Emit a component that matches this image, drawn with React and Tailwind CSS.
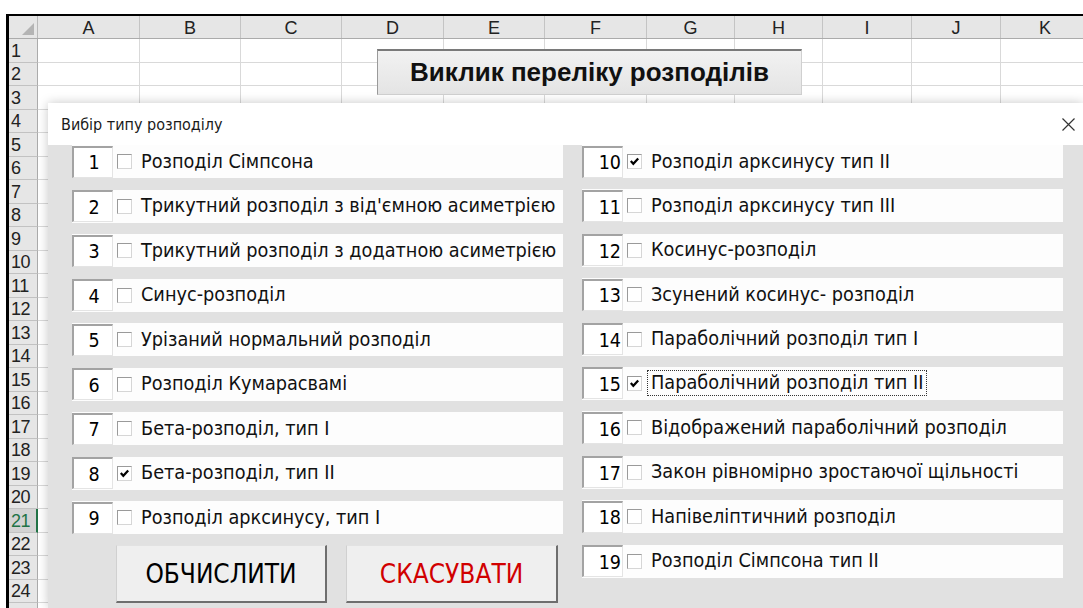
import React from "react";

// Spreadsheet column headers with their pixel widths
const columns = [
  { label: "A", w: "w-[102px]" },
  { label: "B", w: "w-[101px]" },
  { label: "C", w: "w-[101px]" },
  { label: "D", w: "w-[102px]" },
  { label: "E", w: "w-[101px]" },
  { label: "F", w: "w-[102px]" },
  { label: "G", w: "w-[88px]" },
  { label: "H", w: "w-[88px]" },
  { label: "I", w: "w-[89px]" },
  { label: "J", w: "w-[89px]" },
  { label: "K", w: "w-[89px]" },
];

const rows = Array.from({ length: 25 }, (_, i) => i + 1);

const leftItems = [
  { n: 1, text: "Розподіл Сімпсона" },
  { n: 2, text: "Трикутний розподіл з від'ємною асиметрією" },
  { n: 3, text: "Трикутний розподіл з додатною асиметрією" },
  { n: 4, text: "Синус-розподіл" },
  { n: 5, text: "Урізаний нормальний розподіл" },
  { n: 6, text: "Розподіл Кумарасвамі" },
  { n: 7, text: "Бета-розподіл, тип I" },
  { n: 8, text: "Бета-розподіл, тип II", checked: true },
  { n: 9, text: "Розподіл арксинусу, тип I" },
];

const rightItems = [
  { n: 10, text: "Розподіл арксинусу тип II", checked: true },
  { n: 11, text: "Розподіл арксинусу тип III" },
  { n: 12, text: "Косинус-розподіл" },
  { n: 13, text: "Зсунений косинус- розподіл" },
  { n: 14, text: "Параболічний розподіл тип I" },
  { n: 15, text: "Параболічний розподіл тип II", checked: true, focused: true },
  { n: 16, text: "Відображений параболічний розподіл" },
  { n: 17, text: "Закон рівномірно зростаючої щільності" },
  { n: 18, text: "Напівеліптичний розподіл" },
  { n: 19, text: "Розподіл Сімпсона тип II" },
];

const uiFont = "font-['DejaVu_Sans_Condensed','DejaVu_Sans',sans-serif]";

function CheckBox({ checked }) {
  return (
    <div className="w-[15px] h-[15px] shrink-0 bg-white border border-t-[#9a9a9a] border-l-[#9a9a9a] border-r-[#d6d6d6] border-b-[#d6d6d6] flex items-center justify-center">
      {checked && (
        <svg width="11" height="11" viewBox="0 0 11 11">
          <path d="M1.8 5 L4.3 7.8 L9.2 2.4" fill="none" stroke="#000" strokeWidth="2.2" />
        </svg>
      )}
    </div>
  );
}

function Item({ n, text, checked, focused, align }) {
  return (
    <div className="h-[33px] bg-[#fdfdfd] flex items-center">
      <div
        className={
          "w-[41px] h-[32px] shrink-0 bg-white border-t-2 border-l-2 border-t-[#a3a3a3] border-l-[#a3a3a3] border-r border-b border-r-[#e4e4e4] border-b-[#e4e4e4] flex items-center text-[19.5px] text-black leading-none pt-[2px] " +
          (align === "right" ? "justify-end pr-[1px]" : "justify-center pl-[2px]")
        }
      >
        {n}
      </div>
      <div className="ml-[4px]">
        <CheckBox checked={checked} />
      </div>
      <div
        className={
          "ml-[6px] text-[19.7px] text-[#111] whitespace-nowrap leading-[24px] px-[3px] " +
          (focused ? "outline outline-1 outline-dotted outline-[#333]" : "")
        }
      >
        {text}
      </div>
    </div>
  );
}

export default function App() {
  return (
    <div className="relative w-[1083px] h-[608px] overflow-hidden bg-white pt-[14px] pl-[6px]">
      {/* Worksheet */}
      <div className="border-t-2 border-l-[3px] border-black h-full font-['Liberation_Sans',Arial,sans-serif] text-[18px] text-[#222]">
        <div className="flex h-[23px] bg-[#e6e6e6] border-b border-[#ababab]">
          <div className="w-[29px] shrink-0 border-r border-[#b9b9b9] relative">
            <div className="absolute right-[3px] bottom-[3px] w-0 h-0 border-l-[12px] border-l-transparent border-b-[12px] border-b-[#b4b4b4]" />
          </div>
          {columns.map((c) => (
            <div
              key={c.label}
              className={c.w + " shrink-0 border-r border-[#c4c4c4] flex items-center justify-center leading-none pt-[1px]"}
            >
              {c.label}
            </div>
          ))}
        </div>
        {rows.map((r) => (
          <div key={r} className={"flex " + (r % 2 === 1 ? "h-[24px]" : "h-[23px]")}>
            <div
              className={
                "w-[29px] shrink-0 border-b border-[#c2c2c2] flex items-center pl-[2px] leading-none tracking-[-0.5px] " +
                (r === 21
                  ? "bg-[#d3d3d3] text-[#217346] border-r-2 border-r-[#217346]"
                  : "bg-[#e6e6e6] border-r border-r-[#ababab]")
              }
            >
              {r < 25 ? r : ""}
            </div>
            {columns.map((c) => (
              <div key={c.label} className={c.w + " shrink-0 border-r border-b border-[#d9d9d9]"} />
            ))}
          </div>
        ))}
      </div>

      {/* Sheet button that opens the list */}
      <div className="absolute left-[377px] top-[49px] w-[425px] h-[46px] bg-gradient-to-b from-[#f2f2f2] to-[#e4e4e4] border-t-2 border-l border-t-[#7a7a7a] border-l-[#9a9a9a] border-r border-b border-r-[#d0d0d0] border-b-[#d0d0d0] flex items-center justify-center font-['Liberation_Sans',Arial,sans-serif] font-bold text-[26px] text-[#111]">
        Виклик переліку розподілів
      </div>

      {/* Distribution picker dialog */}
      <div className={"absolute left-[48px] top-[103px] right-0 bottom-0 bg-white shadow-[0_0_10px_rgba(0,0,0,0.22)] flex flex-col " + uiFont}>
        <div className="h-[42px] shrink-0 flex items-center justify-between pl-[13px] pr-[7px] text-[16px] text-[#1a1a1a]">
          <span className="pt-[2px]">Вибір типу розподілу</span>
          <svg width="15" height="15" viewBox="0 0 15 15">
            <path d="M1.5 1.5 L13.5 13.5 M13.5 1.5 L1.5 13.5" stroke="#333" strokeWidth="1.2" fill="none" />
          </svg>
        </div>
        <div className="flex-1 bg-[#e1e1e1] flex pl-[24px]">
          <div className="w-[491px] shrink-0 flex flex-col">
            <div className="flex flex-col gap-[11.5px]">
              {leftItems.map((it) => (
                <Item key={it.n} {...it} align="center" />
              ))}
            </div>
            <div className="flex gap-[19px] ml-[44px] mt-[11px]">
              <button className="w-[211px] h-[58px] bg-[#efefef] border-t border-l border-t-[#e2e2e2] border-l-[#d0d0d0] border-r-2 border-b-2 border-r-[#6e6e6e] border-b-[#6e6e6e] text-[26px] text-black pt-[2px]">
                ОБЧИСЛИТИ
              </button>
              <button className="w-[212px] h-[58px] bg-[#efefef] border-t border-l border-t-[#e2e2e2] border-l-[#d0d0d0] border-r-2 border-b-2 border-r-[#6e6e6e] border-b-[#6e6e6e] text-[26px] text-[#d10000] pt-[2px]">
                СКАСУВАТИ
              </button>
            </div>
          </div>
          <div className="w-[481px] shrink-0 ml-[19px] flex flex-col gap-[11.4px]">
            {rightItems.map((it) => (
              <Item key={it.n} {...it} align="right" />
            ))}
          </div>
        </div>
      </div>
    </div>
  );
}
